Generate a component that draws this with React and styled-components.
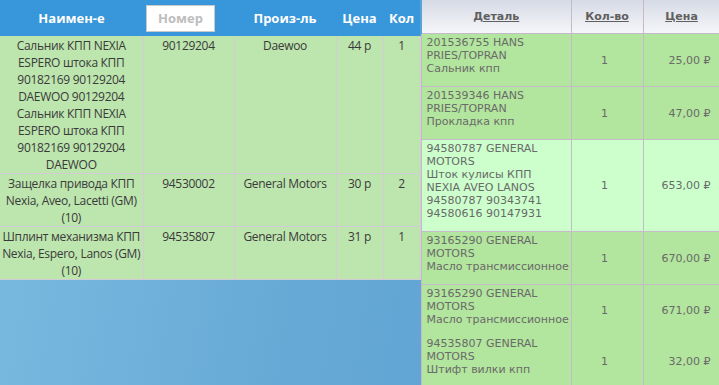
import React from "react";
import styled, { createGlobalStyle } from "styled-components";

const Global = createGlobalStyle`
  html, body { margin: 0; padding: 0; }
  body { width: 719px; height: 385px; overflow: hidden; }
`;

const Page = styled.div`
  display: flex;
  align-items: flex-start;
  width: 719px;
  height: 385px;
  background: linear-gradient(100deg, #7bbbe0 0%, #66a9d6 45%, #5a9ed2 100%);
  overflow: hidden;
`;

const LeftPanel = styled.div`
  width: 420px;
  flex: none;
`;

const LeftTable = styled.table`
  border-collapse: collapse;
  width: 420px;
  table-layout: fixed;
  font-family: "Open Sans", "Noto Sans", sans-serif;
  font-size: 12px;
  letter-spacing: -0.3px;
  line-height: 17px;
  color: #3a3a3a;
`;

const LHead = styled.th`
  background: #3896da;
  color: #fff;
  font-weight: 700;
  font-size: 13px;
  letter-spacing: 0;
  height: 36px;
  padding: 0;
  text-align: center;
  vertical-align: middle;
`;

const SearchBox = styled.div`
  margin: 0 auto 0 3px;
  width: 67px;
  height: 25px;
  background: #fff;
  border: 1px solid #c9c9c9;
  color: #bdbdbd;
  font-weight: 700;
  font-size: 13px;
  line-height: 25px;
  text-align: center;
`;

const LCell = styled.td`
  background: #bde5ae;
  border: 1px solid #d3cbd6;
  border-top: ${(p) => (p.$first ? "none" : "1px solid #d3cbd6")};
  padding: 1px 0 0;
  text-align: center;
  vertical-align: top;
  &:first-child { border-left: none; }
`;

const RightPanel = styled.div`
  width: 299px;
  flex: none;
`;

const RightTable = styled.table`
  border-collapse: collapse;
  width: 299px;
  table-layout: fixed;
  font-family: "DejaVu Sans", Verdana, sans-serif;
  font-size: 11px;
  line-height: 13px;
  color: #6a6a6a;
`;

const RHead = styled.th`
  height: 33px;
  padding: 0;
  background: linear-gradient(#d6dae5, #f5f6f9);
  border: 1px solid #c7b9cc;
  border-top: none;
  color: #5f5f5f;
  font-weight: 700;
  text-decoration: underline;
  text-align: center;
  vertical-align: middle;
  &:first-child { border-left: 2px solid #5aa3d9; }
`;

const RRow = styled.tr`
  background: ${(p) => (p.$hl ? "#ccffcc" : "#b2e59d")};
`;

const RCell = styled.td`
  border-left: 1px solid #c7b9cc;
  border-right: 1px solid #c7b9cc;
  border-bottom: ${(p) => (p.$noLine ? "none" : "1px solid #c7b9cc")};
  padding: ${(p) => (p.$detail ? `2px 0 ${p.$noLine ? 9 : 11}px 5px` : "0 9px 0 4px")};
  text-align: ${(p) => p.$align || "left"};
  vertical-align: ${(p) => (p.$detail ? "top" : "middle")};
  white-space: ${(p) => (p.$detail ? "nowrap" : "normal")};
  &:first-child { border-left: 1px solid #c7b9cc; }
`;

const leftRows = [
  {
    name: "Сальник КПП NEXIA ESPERO штока КПП 90182169 90129204 DAEWOO 90129204 Сальник КПП NEXIA ESPERO штока КПП 90182169 90129204 DAEWOO",
    num: "90129204",
    maker: "Daewoo",
    price: "44 р",
    qty: "1",
  },
  { name: "Защелка привода КПП Nexia, Aveo, Lacetti (GM) (10)", num: "94530002", maker: "General Motors", price: "30 р", qty: "2" },
  { name: "Шплинт механизма КПП Nexia, Espero, Lanos (GM) (10)", num: "94535807", maker: "General Motors", price: "31 р", qty: "1" },
];

const rightRows = [
  { lines: ["201536755 HANS", "PRIES/TOPRAN", "Сальник кпп"], qty: "1", price: "25,00 ₽" },
  { lines: ["201539346 HANS", "PRIES/TOPRAN", "Прокладка кпп"], qty: "1", price: "47,00 ₽" },
  {
    lines: ["94580787 GENERAL", "MOTORS", "Шток кулисы КПП", "NEXIA AVEO LANOS", "94580787 90343741", "94580616 90147931"],
    qty: "1",
    price: "653,00 ₽",
    hl: true,
  },
  { lines: ["93165290 GENERAL", "MOTORS", "Масло трансмиссионное"], qty: "1", price: "670,00 ₽" },
  { lines: ["93165290 GENERAL", "MOTORS", "Масло трансмиссионное"], qty: "1", price: "671,00 ₽", noLine: true },
  { lines: ["94535807 GENERAL", "MOTORS", "Штифт вилки кпп"], qty: "1", price: "32,00 ₽" },
];

export default function App() {
  return (
    <>
      <Global />
      <Page>
        <LeftPanel>
          <LeftTable>
            <colgroup>
              <col style={{ width: 143 }} />
              <col style={{ width: 91 }} />
              <col style={{ width: 102 }} />
              <col style={{ width: 47 }} />
              <col style={{ width: 37 }} />
            </colgroup>
            <thead>
              <tr>
                <LHead>Наимен-е</LHead>
                <LHead>
                  <SearchBox>Номер</SearchBox>
                </LHead>
                <LHead>Произ-ль</LHead>
                <LHead>Цена</LHead>
                <LHead>Кол</LHead>
              </tr>
            </thead>
            <tbody>
              {leftRows.map((r, i) => (
                <tr key={i}>
                  <LCell $first={i === 0}>{r.name}</LCell>
                  <LCell $first={i === 0}>{r.num}</LCell>
                  <LCell $first={i === 0}>{r.maker}</LCell>
                  <LCell $first={i === 0}>{r.price}</LCell>
                  <LCell $first={i === 0}>{r.qty}</LCell>
                </tr>
              ))}
            </tbody>
          </LeftTable>
        </LeftPanel>
        <RightPanel>
          <RightTable>
            <colgroup>
              <col style={{ width: 150 }} />
              <col style={{ width: 72 }} />
              <col style={{ width: 77 }} />
            </colgroup>
            <thead>
              <tr>
                <RHead>Деталь</RHead>
                <RHead>Кол-во</RHead>
                <RHead>Цена</RHead>
              </tr>
            </thead>
            <tbody>
              {rightRows.map((r, i) => (
                <RRow key={i} $hl={r.hl}>
                  <RCell $detail $noLine={r.noLine}>
                    {r.lines.map((l, j) => (
                      <div key={j}>{l}</div>
                    ))}
                  </RCell>
                  <RCell $align="center" $noLine={r.noLine}>{r.qty}</RCell>
                  <RCell $align="right" $noLine={r.noLine}>{r.price}</RCell>
                </RRow>
              ))}
            </tbody>
          </RightTable>
        </RightPanel>
      </Page>
    </>
  );
}
